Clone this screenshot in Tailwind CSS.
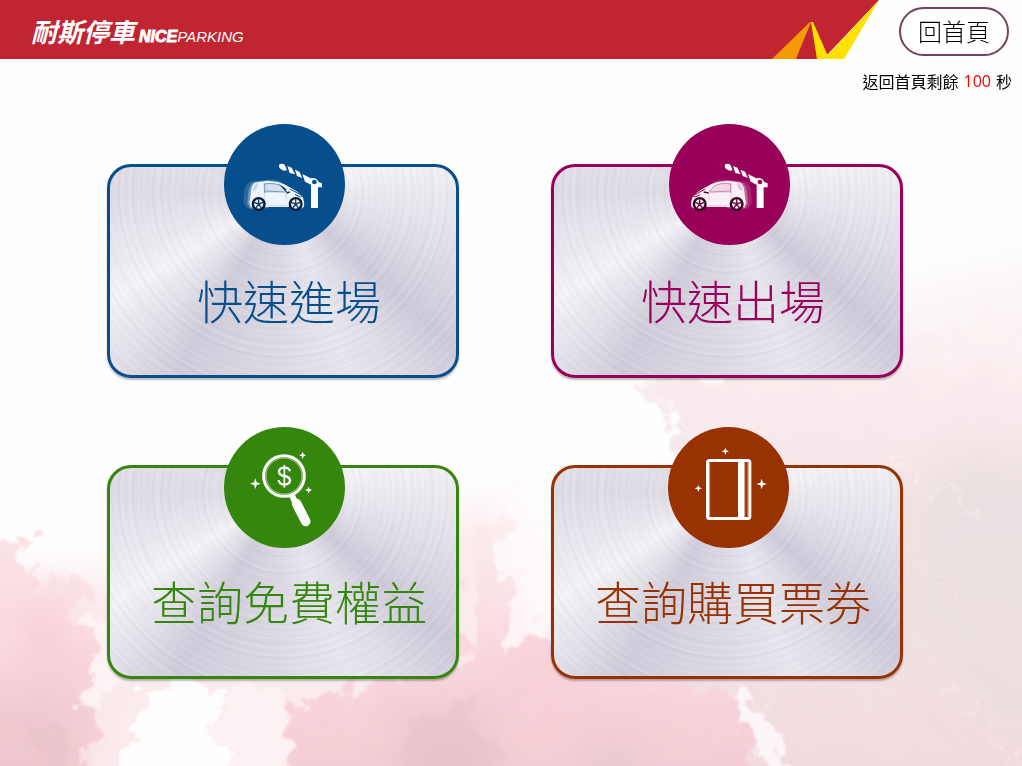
<!DOCTYPE html>
<html lang="zh-Hant">
<head>
<meta charset="utf-8">
<meta name="viewport" content="width=device-width, initial-scale=1">
<title>耐斯停車 NICEPARKING</title>
<script src="https://cdn.jsdelivr.net/npm/@tailwindcss/browser@4"></script>
</head>
<body class="relative isolate min-h-screen overflow-x-hidden bg-white font-['Noto_Sans_CJK_TC',sans-serif]">

<!-- Watercolour backdrop -->
<svg class="absolute inset-0 -z-10 h-full w-full" viewBox="0 0 1022 766" preserveAspectRatio="none" aria-hidden="true">
  <defs>
    <filter id="rough" x="-10%" y="-10%" width="120%" height="120%">
      <feTurbulence type="fractalNoise" baseFrequency="0.035" numOctaves="5" seed="11" result="n"/>
      <feDisplacementMap in="SourceGraphic" in2="n" scale="60" xChannelSelector="R" yChannelSelector="G"/>
      <feGaussianBlur stdDeviation="1"/>
    </filter>
    <filter id="soft" x="-30%" y="-30%" width="160%" height="160%"><feGaussianBlur stdDeviation="20"/></filter>
    <linearGradient id="rightWash" gradientUnits="userSpaceOnUse" x1="0" y1="230" x2="0" y2="766">
      <stop offset="0" stop-color="#fdf8f8" stop-opacity="0"/><stop offset=".3" stop-color="#f8ebed"/><stop offset=".7" stop-color="#f4e2e5"/><stop offset="1" stop-color="#f2dbdf"/>
    </linearGradient>
    <linearGradient id="pinkFade" gradientUnits="userSpaceOnUse" x1="0" y1="520" x2="0" y2="766">
      <stop offset="0" stop-color="#fbe8eb" stop-opacity=".4"/><stop offset=".5" stop-color="#f9d9df"/><stop offset="1" stop-color="#f4ced4"/>
    </linearGradient>
  </defs>
  <rect width="1022" height="766" fill="#fefefe"/>
  <g filter="url(#soft)">
    <path d="M-60 580L60 570 220 590 500 500 560 640 560 830H-60z" fill="#fbebed"/>
    <path d="M910 290L1090 250V480H840L730 400z" fill="#fbf4f5"/>
  </g>
  <g filter="url(#rough)">
    <path d="M640 380L760 375 900 340 1080 300V810H500L520 650 580 620 700 470z" fill="url(#rightWash)"/>
    <path d="M-30 540L35 540 20 590 -30 640z" fill="#f9dbe0" opacity=".8"/>
    <path d="M-40 600L20 570 70 580 100 640 90 720 80 810H-40z" fill="url(#pinkFade)"/>
    <path d="M290 710L340 690 460 660 470 540 500 520 540 640 600 640 740 700 760 810H300z" fill="url(#pinkFade)"/>
  </g>
  <g filter="url(#soft)">
    <path d="M-40 700L80 690 70 820H-40z" fill="#ecc3ca" opacity=".7"/>
    <path d="M10 600L70 600 80 690 30 700z" fill="#f8cdd5" opacity=".7"/>
    <path d="M395 720L490 700 500 820H400z" fill="#e4c2c7" opacity=".7"/>
    <path d="M900 500L960 450 1090 470V720L1000 720 900 620z" fill="#e8dfdf" opacity=".8"/>
    <path d="M580 740L640 735 650 820H580z" fill="#e4c8cd" opacity=".7"/>
    <path d="M500 650L560 640 600 700 540 780 480 720z" fill="#f8cfd6" opacity=".7"/>
  </g>
  <g filter="url(#rough)">
    <path d="M140 690L220 680 225 810H130z" fill="#fffefe"/>
    <path d="M225 690H285L295 810H225z" fill="#fdf4f5" opacity=".8"/>
    <path d="M95 620L125 600 118 690 90 720z" fill="#fef5f6" opacity=".8"/>
    <path d="M505 470L570 560 550 640 510 640z" fill="#fffafb" opacity=".8"/>
    <path d="M720 690L750 690 810 780H780z" fill="#fffbfc" opacity=".8"/>
    <path d="M410 720L470 700 510 790H420z" fill="#e3c0c6" opacity=".3"/>
    <path d="M40 720L75 740 60 810H30z" fill="#e3c0c6" opacity=".4"/>
    <path d="M915 560L960 600 1060 700M920 640L960 700 1020 770" fill="none" stroke="#fbe9ec" stroke-width="2" opacity=".8"/>
    <path d="M650 400L700 440 720 470M905 470L980 520" fill="none" stroke="#fff6f7" stroke-width="3" opacity=".6"/>
  </g>
</svg>

<header class="flex h-[59px]">
  <div class="flex flex-1 items-center bg-[#c02531] pl-[31px]">
    <h1 class="flex items-baseline pt-1 text-white italic">
      <span class="text-[26px] font-bold leading-8">耐斯停車</span>
      <span class="ml-1 font-['Liberation_Sans',sans-serif] text-[16px] font-bold [-webkit-text-stroke:1px_white]">NICE</span>
      <span class="font-['Liberation_Sans',sans-serif] text-[15px]">PARKING</span>
    </h1>
  </div>
  <svg class="h-[59px] w-[107px] shrink-0" viewBox="0 0 107 59" aria-hidden="true">
    <path d="M0 0H107L56 54 45 59H0z" fill="#c02531"/>
    <path d="M38 22H39L24 59H0z" fill="#f59a00"/>
    <path d="M39 22H41L55 54H57L107 0 72 59H45z" fill="#ffe100"/>
  </svg>
  <div class="flex shrink-0 items-start pt-[7px] pr-[13px] pl-5">
    <button type="button" class="h-[49px] w-[110px] rounded-full border-2 border-[#74405f] bg-white pb-[2px] text-[24px] font-light text-black">回首頁</button>
  </div>
</header>

<p class="mt-[10px] flex h-6 items-center justify-end pr-[10px] text-[16px] text-black">返回首頁剩餘<span class="mr-[5px] ml-[5px] font-['Open_Sans',sans-serif] text-[#f00]">100</span>秒</p>

<main class="grid grid-cols-2 gap-x-[92px] gap-y-[87px] pt-[71px] pr-[119px] pb-[87px] pl-[107px]">
  <button type="button" class="flex h-[214px] flex-col items-center rounded-[24px] border-3 border-[#074e8c] bg-[repeating-radial-gradient(circle_at_50%_26px,#ffffff10_0_1px,#9a93ad0a_2px_3px,#ffffff00_5px_7px),repeating-radial-gradient(circle_at_50%_26px,#ffffff00_0_7px,#ffffff18_9px,#8d86a30c_11px,#ffffff00_13px_17px),repeating-radial-gradient(circle_at_50%_26px,#ffffff00_0_3px,#8d86a30a_5px,#ffffff14_8px,#ffffff00_12px_29px),conic-gradient(from_0deg_at_50%_26px,#dedbe5_0deg,#e9e8ee_40deg,#f3f2f6_75deg,#e9e7ee_95deg,#dcd9e4_115deg,#cdc9d8_132deg,#dedce6_147deg,#e7e6ed_160deg,#dddae5_180deg,#d7d4e0_195deg,#cfcbd9_211deg,#e3e1e9_225deg,#f4f3f7_238deg,#e9e7ee_252deg,#dedbe5_270deg,#e2dfe8_285deg,#d3cfdc_310deg,#d0ccda_335deg,#dedbe5_360deg)] text-[46px] font-light text-[#074e8c] shadow-[0_2px_2px_#0004]">
    <span class="-mt-[43px] ml-[3px] block rounded-full bg-[#074e8c]">
      <svg class="block size-[121px]" viewBox="27 27 363 363" aria-hidden="true">
        <g>
          <path d="M85 262L88 225Q92 203 112 199L170 193 200 198 120 285 96 280z" fill="#fff" opacity=".14"/>
          <path d="M97 265L100 228Q105 206 118 201L165 195 160 280H105z" fill="#fff" opacity=".3"/>
          <path d="M103 264L107 238Q108 212 118 205 124 200 158 198 188 198 208 208L235 223Q258 236 264 248 270 264 266 276L258 281 240 250 220 276H152L132 248 108 278z" fill="#eef4fb"/>
          <path d="M146 209Q144 220 147 234L215 233 202 215Q187 205 172 205L147 206z" fill="#d3e0ef"/>
          <path d="M149 228L212 231M149 207V234M146 207Q180 202 198 213L214 231" fill="none" stroke="#4a76a5" stroke-width="2"/>
          <path d="M190 206Q209 215 221 229L214 232 200 216z" fill="#123e6c"/>
          <path d="M112 224L122 206 131 205 123 225z" fill="#c4d5e8"/>
          <path d="M148 235Q146 265 158 272H218M214 234V258" fill="none" stroke="#b5c9e0" stroke-width="2"/>
          <path d="M225 222L262 242 256 246 240 239" fill="none" stroke="#174b80" stroke-width="3"/>
          <circle cx="219" cy="226" r="5" fill="#fff"/><path d="M215 234L224 231" stroke="#0b2c50" stroke-width="4"/>
          <g fill="#071c36"><circle cx="131" cy="267" r="21"/><circle cx="242" cy="267" r="21"/></g>
          <g fill="#e7eef7"><circle cx="131" cy="267" r="14"/><circle cx="242" cy="267" r="14"/></g>
          <path d="M131 267V252M131 267L145 262M131 267L140 280M131 267L122 280M131 267L117 262M242 267V252M242 267L256 262M242 267L251 280M242 267L233 280M242 267L228 262" stroke="#1b406b" stroke-width="4"/>
        </g>
        <g id="gate" fill="#fff">
          <path d="M193 148Q201 144 209 149L216 166 206 167Q195 163 192 156z"/>
          <path d="M217 153L230 158 240 178 224 174z"/>
          <path d="M240 164L253 170 262 189 246 183z"/>
          <path fill-rule="evenodd" d="M262 177L287 190Q296 187 305 193L312 202 321 205V217H309V279H288V209L270 200zM298 194a7 7 0 1 0 .1 0z"/>
        </g>
      </svg>
    </span>
    <span class="mt-[18px] ml-3 leading-[72px]">快速進場</span>
  </button>

  <button type="button" class="flex h-[214px] flex-col items-center rounded-[24px] border-3 border-[#98005a] bg-[repeating-radial-gradient(circle_at_50%_26px,#ffffff10_0_1px,#9a93ad0a_2px_3px,#ffffff00_5px_7px),repeating-radial-gradient(circle_at_50%_26px,#ffffff00_0_7px,#ffffff18_9px,#8d86a30c_11px,#ffffff00_13px_17px),repeating-radial-gradient(circle_at_50%_26px,#ffffff00_0_3px,#8d86a30a_5px,#ffffff14_8px,#ffffff00_12px_29px),conic-gradient(from_0deg_at_50%_26px,#dedbe5_0deg,#e9e8ee_40deg,#f3f2f6_75deg,#e9e7ee_95deg,#dcd9e4_115deg,#cdc9d8_132deg,#dedce6_147deg,#e7e6ed_160deg,#dddae5_180deg,#d7d4e0_195deg,#cfcbd9_211deg,#e3e1e9_225deg,#f4f3f7_238deg,#e9e7ee_252deg,#dedbe5_270deg,#e2dfe8_285deg,#d3cfdc_310deg,#d0ccda_335deg,#dedbe5_360deg)] text-[46px] font-light text-[#98005a] shadow-[0_2px_2px_#0004]">
    <span class="-mt-[43px] ml-[5px] block rounded-full bg-[#98005a]">
      <svg class="block size-[121px]" viewBox="27 27 363 363" aria-hidden="true">
        <g transform="translate(361 0) scale(-1 1)">
          <path d="M85 262L88 225Q92 203 112 199L170 193 200 198 120 285 96 280z" fill="#fff" opacity=".14"/>
          <path d="M97 265L100 228Q105 206 118 201L165 195 160 280H105z" fill="#fff" opacity=".3"/>
          <path d="M103 264L107 238Q108 212 118 205 124 200 158 198 188 198 208 208L235 223Q258 236 264 248 270 264 266 276L258 281 240 250 220 276H152L132 248 108 278z" fill="#fceef6"/>
          <path d="M146 209Q144 220 147 234L215 233 202 215Q187 205 172 205L147 206z" fill="#f0d6e5"/>
          <path d="M149 228L212 231M149 207V234M146 207Q180 202 198 213L214 231" fill="none" stroke="#ad6690" stroke-width="2"/>
          <path d="M112 224L122 206 131 205 123 225z" fill="#e6c0d6"/>
          <path d="M148 235Q146 265 158 272H218M214 234V258" fill="none" stroke="#e0b8d0" stroke-width="2"/>
          <path d="M225 222L262 242 256 246 240 239" fill="none" stroke="#85104f" stroke-width="3"/>
          <circle cx="219" cy="226" r="5" fill="#fff"/><path d="M215 234L230 231" stroke="#4a042e" stroke-width="4"/>
          <g fill="#2e0620"><circle cx="131" cy="267" r="21"/><circle cx="242" cy="267" r="21"/></g>
          <g fill="#f8e6f0"><circle cx="131" cy="267" r="14"/><circle cx="242" cy="267" r="14"/></g>
          <path d="M131 267V252M131 267L145 262M131 267L140 280M131 267L122 280M131 267L117 262M242 267V252M242 267L256 262M242 267L251 280M242 267L233 280M242 267L228 262" stroke="#6d1047" stroke-width="4"/>
        </g>
        <use href="#gate" x="2"/>
      </svg>
    </span>
    <span class="mt-[18px] ml-3 leading-[72px]">快速出場</span>
  </button>

  <button type="button" class="flex h-[214px] flex-col items-center rounded-[24px] border-3 border-[#34870c] bg-[repeating-radial-gradient(circle_at_50%_26px,#ffffff10_0_1px,#9a93ad0a_2px_3px,#ffffff00_5px_7px),repeating-radial-gradient(circle_at_50%_26px,#ffffff00_0_7px,#ffffff18_9px,#8d86a30c_11px,#ffffff00_13px_17px),repeating-radial-gradient(circle_at_50%_26px,#ffffff00_0_3px,#8d86a30a_5px,#ffffff14_8px,#ffffff00_12px_29px),conic-gradient(from_0deg_at_50%_26px,#dedbe5_0deg,#e9e8ee_40deg,#f3f2f6_75deg,#e9e7ee_95deg,#dcd9e4_115deg,#cdc9d8_132deg,#dedce6_147deg,#e7e6ed_160deg,#dddae5_180deg,#d7d4e0_195deg,#cfcbd9_211deg,#e3e1e9_225deg,#f4f3f7_238deg,#e9e7ee_252deg,#dedbe5_270deg,#e2dfe8_285deg,#d3cfdc_310deg,#d0ccda_335deg,#dedbe5_360deg)] text-[46px] font-light text-[#34870c] shadow-[0_2px_2px_#0004]">
    <span class="-mt-[41px] ml-[3px] block rounded-full bg-[#34870c]">
      <svg class="block size-[121px]" viewBox="27 27 363 363" aria-hidden="true">
        <g fill="none" stroke="#fff">
          <circle cx="207" cy="174" r="61" stroke-width="9"/>
          <circle cx="207" cy="174" r="54" stroke-width="2" opacity=".8"/>
          <path d="M229 228L239 250" stroke-width="18"/>
          <path d="M245 257L272 310" stroke-width="29" stroke-linecap="round"/>
          <path d="M225 160Q223 149 208 149 192 150 192 161 192 171 208 174 225 177 225 188 224 199 208 200 192 199 191 186" stroke-width="7"/>
          <path d="M208 141V209" stroke-width="5"/>
        </g>
        <path fill="#fff" d="M121 181L125 193 137 197 125 201 121 213 117 201 105 197 117 193zM263 101L266 109 274 112 266 115 263 123 260 115 252 112 260 109zM281 206L284 213 292 216 284 219 281 227 278 219 270 216 278 213z"/>
      </svg>
    </span>
    <span class="mt-[16px] ml-3 leading-[72px]">查詢免費權益</span>
  </button>

  <button type="button" class="flex h-[214px] flex-col items-center rounded-[24px] border-3 border-[#983200] bg-[repeating-radial-gradient(circle_at_50%_26px,#ffffff10_0_1px,#9a93ad0a_2px_3px,#ffffff00_5px_7px),repeating-radial-gradient(circle_at_50%_26px,#ffffff00_0_7px,#ffffff18_9px,#8d86a30c_11px,#ffffff00_13px_17px),repeating-radial-gradient(circle_at_50%_26px,#ffffff00_0_3px,#8d86a30a_5px,#ffffff14_8px,#ffffff00_12px_29px),conic-gradient(from_0deg_at_50%_26px,#dedbe5_0deg,#e9e8ee_40deg,#f3f2f6_75deg,#e9e7ee_95deg,#dcd9e4_115deg,#cdc9d8_132deg,#dedce6_147deg,#e7e6ed_160deg,#dddae5_180deg,#d7d4e0_195deg,#cfcbd9_211deg,#e3e1e9_225deg,#f4f3f7_238deg,#e9e7ee_252deg,#dedbe5_270deg,#e2dfe8_285deg,#d3cfdc_310deg,#d0ccda_335deg,#dedbe5_360deg)] text-[46px] font-light text-[#983200] shadow-[0_2px_2px_#0004]">
    <span class="-mt-[41px] ml-[3px] block rounded-full bg-[#983200]">
      <svg class="block size-[121px]" viewBox="24 27 363 363" aria-hidden="true">
        <rect x="142.500" y="127.500" width="127" height="174" rx="6" fill="none" stroke="#fff" stroke-width="9"/>
        <path d="M234 128H253V301H234z" fill="#fff"/>
        <path d="M149 133V296M254 133V296M264 133V296" stroke="#d9b19e" stroke-width="3"/>
        <path fill="#fff" d="M196 89L199 97 207 100 199 103 196 111 193 103 185 100 193 97zM115 201L118 208 126 211 118 214 115 222 112 214 104 211 112 208zM305 182L309 194 321 198 309 202 305 214 301 202 289 198 301 194z"/>
      </svg>
    </span>
    <span class="mt-[16px] ml-3 leading-[72px]">查詢購買票券</span>
  </button>
</main>
</body>
</html>
